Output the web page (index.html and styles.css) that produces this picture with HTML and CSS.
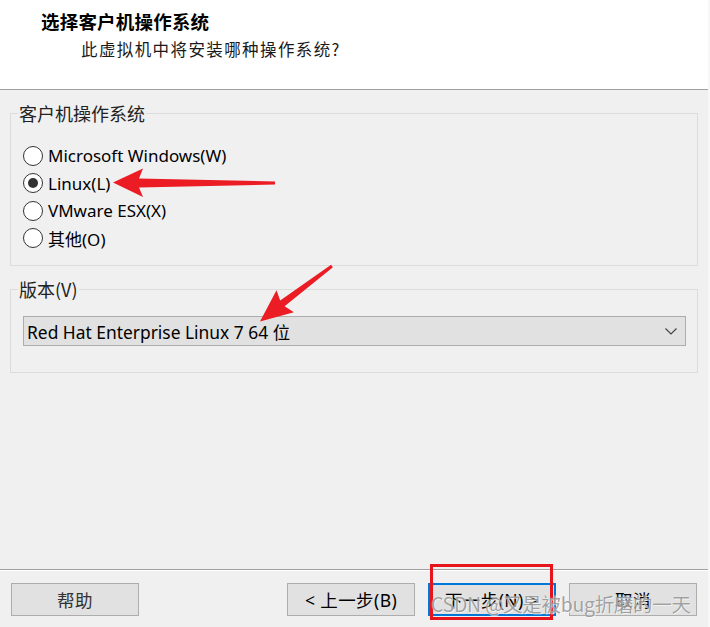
FILE: index.html
```html
<!DOCTYPE html>
<html lang="zh-CN">
<head>
<meta charset="utf-8">
<title>新建虚拟机向导</title>
<link rel="stylesheet" href="styles.css">
</head>
<body>
<div class="window">
  <header class="head">
    <h1 class="title">选择客户机操作系统</h1>
    <p class="subtitle">此虚拟机中将安装哪种操作系统?</p>
  </header>
  <main class="content">
    <fieldset class="group os">
      <legend class="legend">客户机操作系统</legend>
      <label class="radio-row"><span class="radio"></span><span>Microsoft Windows(W)</span></label>
      <label class="radio-row"><span class="radio checked"></span><span>Linux(L)</span></label>
      <label class="radio-row"><span class="radio"></span><span>VMware ESX(X)</span></label>
      <label class="radio-row"><span class="radio"></span><span>其他(O)</span></label>
    </fieldset>
    <fieldset class="group ver">
      <legend class="legend">版本(V)</legend>
      <div class="select">
        <span class="select-text">Red Hat Enterprise Linux 7 64 位</span>
        <svg class="chev" width="12" height="7" viewBox="0 0 12 7"><path d="M0.5 0.5 L6 6 L11.5 0.5" fill="none" stroke="#444" stroke-width="1.2"/></svg>
      </div>
    </fieldset>
  </main>
  <footer class="foot">
    <button class="btn help">帮助</button>
    <div class="nav">
      <button class="btn">&lt; 上一步(B)</button>
      <button class="btn primary">下一步(N) &gt;</button>
      <button class="btn">取消</button>
    </div>
  </footer>

  <svg class="annot" width="710" height="627" viewBox="0 0 710 627">
    <polygon fill="#ec1c24" points="113,182.5 143,168.5 139,178.5 275,181.5 275,184.5 139,187.5 143,197"/>
    <polygon fill="#ec1c24" points="260,321.5 276.5,290.2 280.2,300.6 331.1,264.8 332.9,267.2 284.6,306.2 293.9,312.2"/>
  </svg>
  <div class="redbox"></div>
  <div class="watermark">CSDN @又是被bug折磨的一天</div>
</div>
</body>
</html>
```
FILE: styles.css
```css
html, body {
  margin: 0;
  padding: 0;
}
body {
  background: #f7f7f7;
  font-family: "Noto Sans", "Noto Sans CJK SC", sans-serif;
  color: #000;
}
.window {
  position: relative;
  width: 708px;
  height: 627px;
  background: #f0f0f0;
  display: flex;
  flex-direction: column;
  overflow: hidden;
}
.head {
  height: 89px;
  background: #fff;
  border-bottom: 1px solid #a0a0a0;
  flex: none;
}
.title {
  margin: 0;
  padding: 10px 0 0 41px;
  font-family: "Noto Sans CJK SC", sans-serif;
  font-weight: 700;
  font-size: 18.5px;
  line-height: 22px;
  letter-spacing: 0.2px;
}
.subtitle {
  margin: 0;
  padding: 6px 0 0 81px;
  font-family: "Noto Sans CJK SC", sans-serif;
  font-size: 16.5px;
  line-height: 22px;
  letter-spacing: 1.4px;
  color: #1a1a1a;
}
.content {
  flex: 1;
}
.group {
  margin: 12px 10px 0 10px;
  border: 1px solid #dcdcdc;
  min-width: 0;
}
.legend {
  font-family: "Noto Sans CJK SC", sans-serif;
  font-size: 18px;
  line-height: 22px;
  padding: 0 1px;
  margin-left: -5px;
  color: #222;
}
.os {
  padding: 18px 11px 13px 12px;
}
.radio-row {
  display: flex;
  align-items: center;
  height: 27.5px;
  font-size: 17px;
  gap: 5px;
}
.radio {
  box-sizing: border-box;
  width: 20px;
  height: 20px;
  border: 1px solid #333;
  border-radius: 50%;
  background: #fff;
  display: flex;
  align-items: center;
  justify-content: center;
  flex: none;
}
.radio.checked::after {
  content: "";
  width: 10px;
  height: 10px;
  border-radius: 50%;
  background: #333;
}
.ver {
  margin-top: 12px;
  padding: 16px 11px 26px 12px;
}
.select {
  box-sizing: border-box;
  height: 30px;
  background: #e1e1e1;
  border: 1px solid #adadad;
  display: flex;
  align-items: center;
  justify-content: space-between;
  padding: 0 8px 0 3px;
  font-size: 17.4px;
}
.chev {
  display: block;
}
.foot {
  flex: none;
  height: 58px;
  border-top: 1px solid #a0a0a0;
  box-shadow: inset 0 1px 0 #fff;
  box-sizing: border-box;
  display: flex;
  justify-content: space-between;
  align-items: flex-start;
  padding: 13px 11px 0 11px;
}
.nav {
  display: flex;
  gap: 13px;
}
.btn {
  box-sizing: border-box;
  width: 128px;
  height: 33px;
  background: #e1e1e1;
  border: 1px solid #adadad;
  font-family: "Noto Sans", "Noto Sans CJK SC", sans-serif;
  font-size: 17.5px;
  letter-spacing: 0.4px;
  color: #000;
  padding: 0;
}
.btn.help {
  color: #333;
}
.btn.primary {
  border: 2px solid #0078d7;
}
.annot {
  position: absolute;
  left: 0;
  top: 0;
  pointer-events: none;
}
.redbox {
  position: absolute;
  left: 430px;
  top: 564px;
  width: 123px;
  height: 56px;
  box-sizing: border-box;
  border: 3px solid #e8141c;
  pointer-events: none;
}
.watermark {
  position: absolute;
  left: 431px;
  top: 591px;
  font-family: "Noto Sans CJK SC", sans-serif;
  font-size: 19.5px;
  line-height: 26px;
  letter-spacing: -0.3px;
  color: rgba(100, 100, 100, 0.6);
  text-shadow: 0 0 1px rgba(255, 255, 255, 0.9), 1px 1px 0 rgba(255, 255, 255, 0.5);
  white-space: nowrap;
  pointer-events: none;
}
```
